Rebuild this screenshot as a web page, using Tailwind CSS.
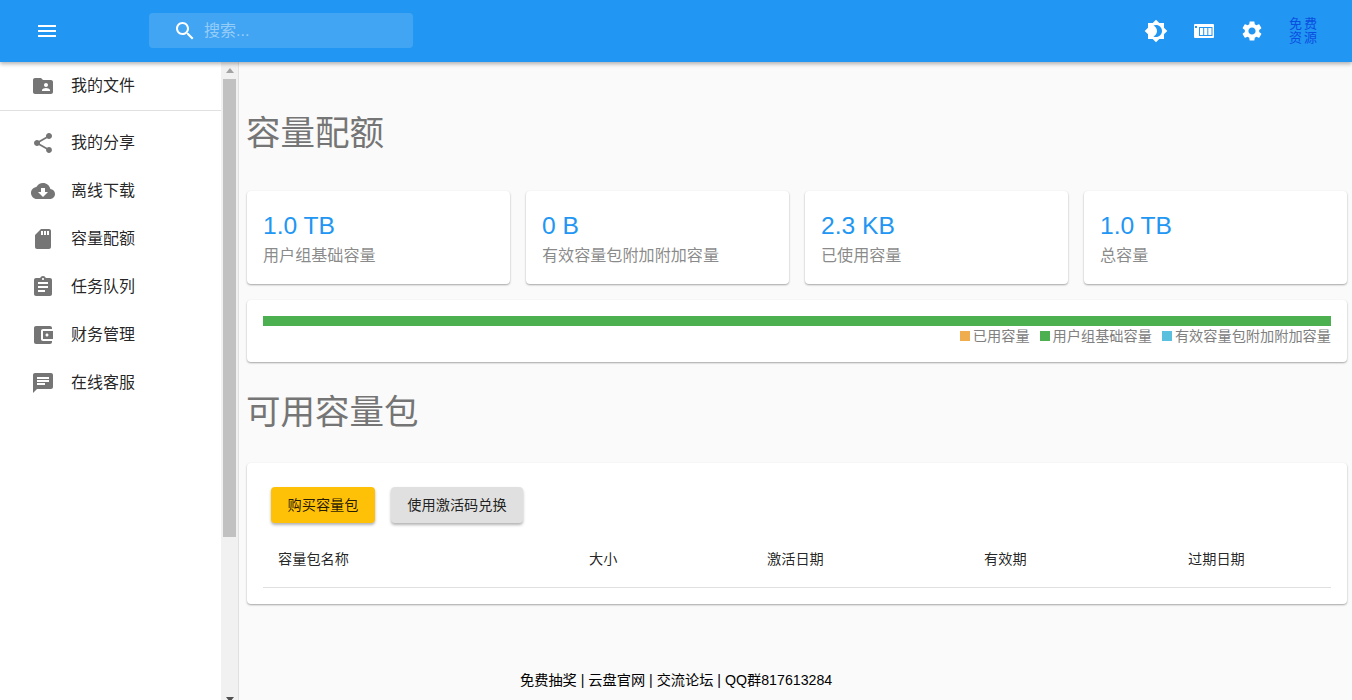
<!DOCTYPE html>
<html lang="zh-CN">
<head>
    <meta charset="UTF-8" />
    <meta name="viewport" content="width=device-width, initial-scale=1.0" />
    <title>容量配额</title>
    <script src="https://cdn.jsdelivr.net/npm/@tailwindcss/browser@4"></script>
</head>
<body class="h-screen overflow-hidden flex flex-col bg-[#fafafa] font-['Liberation_Sans','Noto_Sans_CJK_SC',sans-serif]">

<!-- App bar -->
<header class="relative z-10 h-[62px] shrink-0 flex items-center pb-[1px] bg-[#2196f3] shadow-[0_2px_4px_rgba(0,0,0,0.3)]">
    <button class="ml-[35px] w-6 h-6 text-white" aria-label="menu">
        <svg viewBox="0 0 24 24" fill="currentColor" class="w-6 h-6"><path d="M3 18h18v-2H3v2zm0-5h18v-2H3v2zm0-7v2h18V6H3z" /></svg>
    </button>
    <div class="ml-[90px] w-[264px] h-[35px] flex items-center rounded bg-white/15">
        <svg viewBox="0 0 24 24" fill="white" class="ml-[24px] w-6 h-6 shrink-0"><path d="M15.5 14h-.79l-.28-.27C15.41 12.59 16 11.11 16 9.5 16 5.91 13.09 3 9.5 3S3 5.91 3 9.5 5.91 16 9.5 16c1.61 0 3.09-.59 4.23-1.57l.27.28v.79l5 4.99L20.49 19l-4.99-5zm-6 0C7.01 14 5 11.99 5 9.5S7.01 5 9.5 5 14 7.01 14 9.5 11.99 14 9.5 14z" /></svg>
        <span class="ml-[7px] text-base text-white/45">搜索...</span>
    </div>
    <div class="ml-auto flex items-center text-white">
        <svg viewBox="0 0 24 24" fill="currentColor" class="w-6 h-6"><path d="M20 8.69V4h-4.69L12 .69 8.69 4H4v4.69L.69 12 4 15.31V20h4.69L12 23.31 15.31 20H20v-4.69L23.31 12 20 8.69zM12 18c-.89 0-1.74-.2-2.5-.55C11.56 16.5 13 14.42 13 12s-1.44-4.5-3.5-5.45C10.26 6.2 11.11 6 12 6c3.31 0 6 2.69 6 6s-2.69 6-6 6z" /></svg>
        <svg viewBox="0 0 24 24" class="ml-[24px] w-6 h-6">
            <rect x="2" y="5" width="20" height="14" rx="1" fill="white" />
            <rect x="3" y="7" width="2" height="2" fill="#2196f3" />
            <rect x="7.500" y="8.500" width="12.500" height="8" fill="none" stroke="#2196f3" />
            <path d="M11.700 8.500v8M15.800 8.500v8" stroke="#2196f3" fill="none" />
        </svg>
        <svg viewBox="0 0 24 24" fill="currentColor" class="ml-[24px] w-6 h-6"><path d="M19.14 12.94c.04-.3.06-.61.06-.94 0-.32-.02-.64-.07-.94l2.03-1.58c.18-.14.23-.41.12-.61l-1.92-3.32c-.12-.22-.37-.29-.59-.22l-2.39.96c-.5-.38-1.03-.7-1.62-.94l-.36-2.54c-.04-.24-.24-.41-.48-.41h-3.84c-.24 0-.43.17-.47.41l-.36 2.54c-.59.24-1.13.57-1.62.94l-2.39-.96c-.22-.08-.47 0-.59.22L2.74 8.87c-.12.21-.08.47.12.61l2.03 1.58c-.05.3-.09.63-.09.94s.02.64.07.94l-2.03 1.58c-.18.14-.23.41-.12.61l1.92 3.32c.12.22.37.29.59.22l2.39-.96c.5.38 1.03.7 1.62.94l.36 2.54c.05.24.24.41.48.41h3.84c.24 0 .44-.17.47-.41l.36-2.54c.59-.24 1.13-.56 1.62-.94l2.39.96c.22.08.47 0 .59-.22l1.92-3.32c.12-.22.07-.47-.12-.61l-2.01-1.58zM12 15.6c-1.98 0-3.6-1.62-3.6-3.6s1.62-3.6 3.6-3.6 3.6 1.62 3.6 3.6-1.62 3.6-3.6 3.6z" /></svg>
        <!-- logo -->
        <div class="ml-[25px] mr-[35px] w-[28px] grid grid-cols-2 gap-x-[2px] text-[13px] leading-[14px] text-center text-[#0a4fe0]">
            <span>免</span><span>费</span><span>资</span><span>源</span>
        </div>
    </div>
</header>

<div class="flex flex-1 min-h-0">
    <!-- Sidebar -->
    <aside class="w-[239px] shrink-0 flex bg-white border-r border-[#e0e0e0]">
        <nav class="w-[221px] shrink-0 text-base text-black/87">
            <a class="h-[49px] pb-[1px] flex items-center border-b border-[#e0e0e0]">
                <svg viewBox="0 0 24 24" fill="#757575" class="ml-[31px] w-6 h-6"><path d="M20 6h-8l-2-2H4c-1.1 0-1.99.9-1.99 2L2 18c0 1.1.9 2 2 2h16c1.1 0 2-.9 2-2V8c0-1.1-.9-2-2-2zm-5 3c1.1 0 2 .9 2 2s-.9 2-2 2-2-.9-2-2 .9-2 2-2zm4 8h-8v-1c0-1.33 2.67-2 4-2s4 .67 4 2v1z" /></svg>
                <span class="ml-[16px]">我的文件</span>
            </a>
            <a class="mt-[8px] h-[48px] flex items-center">
                <svg viewBox="0 0 24 24" fill="#757575" class="ml-[31px] w-6 h-6"><path d="M18 16.08c-.76 0-1.44.3-1.96.77L8.910 12.700c.05-.23.09-.46.09-.7s-.04-.47-.09-.7l7.050-4.110c.54.5 1.250.81 2.040.81 1.660 0 3-1.340 3-3s-1.340-3-3-3-3 1.340-3 3c0 .24.04.47.09.7L8.040 9.810C7.500 9.310 6.790 9 6 9c-1.660 0-3 1.340-3 3s1.340 3 3 3c.79 0 1.500-.31 2.040-.81l7.120 4.160c-.05.21-.08.43-.08.65 0 1.610 1.310 2.920 2.920 2.920 1.610 0 2.920-1.310 2.920-2.920s-1.310-2.920-2.920-2.920z" /></svg>
                <span class="ml-[16px]">我的分享</span>
            </a>
            <a class="h-[48px] flex items-center">
                <svg viewBox="0 0 24 24" fill="#757575" class="ml-[31px] w-6 h-6"><path d="M19.35 10.04C18.67 6.59 15.64 4 12 4 9.11 4 6.6 5.64 5.35 8.04 2.34 8.36 0 10.91 0 14c0 3.31 2.69 6 6 6h13c2.76 0 5-2.24 5-5 0-2.64-2.05-4.78-4.65-4.96zM17 13l-5 5-5-5h3V9h4v4h3z" /></svg>
                <span class="ml-[16px]">离线下载</span>
            </a>
            <a class="h-[48px] flex items-center">
                <svg viewBox="0 0 24 24" fill="#757575" class="ml-[31px] w-6 h-6"><path d="M18 2h-8L4.020 8 4 20c0 1.100.9 2 2 2h12c1.100 0 2-.9 2-2V4c0-1.100-.9-2-2-2zm-6 6h-2V4h2v4zm3 0h-2V4h2v4zm3 0h-2V4h2v4z" /></svg>
                <span class="ml-[16px]">容量配额</span>
            </a>
            <a class="h-[48px] flex items-center">
                <svg viewBox="0 0 24 24" fill="#757575" class="ml-[31px] w-6 h-6"><path d="M19 3h-4.180C14.400 1.840 13.300 1 12 1c-1.300 0-2.400.84-2.820 2H5c-1.100 0-2 .9-2 2v14c0 1.100.9 2 2 2h14c1.100 0 2-.9 2-2V5c0-1.100-.9-2-2-2zm-7 0c.55 0 1 .45 1 1s-.45 1-1 1-1-.45-1-1 .45-1 1-1zm2 14H7v-2h7v2zm3-4H7v-2h10v2zm0-4H7V7h10v2z" /></svg>
                <span class="ml-[16px]">任务队列</span>
            </a>
            <a class="h-[48px] flex items-center">
                <svg viewBox="0 0 24 24" fill="#757575" class="ml-[31px] w-6 h-6"><path d="M21 18v1c0 1.100-.9 2-2 2H5c-1.110 0-2-.9-2-2V5c0-1.100.89-2 2-2h14c1.100 0 2 .9 2 2v1h-9c-1.110 0-2 .9-2 2v8c0 1.100.89 2 2 2h9zm-9-2h10V8H12v8zm4-2.500c-.83 0-1.500-.67-1.500-1.500s.67-1.500 1.500-1.500 1.500.67 1.500 1.500-.67 1.500-1.500 1.500z" /></svg>
                <span class="ml-[16px]">财务管理</span>
            </a>
            <a class="h-[48px] flex items-center">
                <svg viewBox="0 0 24 24" fill="#757575" class="ml-[31px] w-6 h-6"><path d="M20 2H4c-1.100 0-1.990.9-1.990 2L2 22l4-4h14c1.100 0 2-.9 2-2V4c0-1.100-.9-2-2-2zM6 9h12v2H6V9zm8 5H6v-2h8v2zm4-6H6V6h12v2z" /></svg>
                <span class="ml-[16px]">在线客服</span>
            </a>
        </nav>
        <!-- Scrollbar -->
        <div class="w-[17px] flex flex-col items-center bg-[#f1f1f1]">
            <div class="mt-[6px] w-0 h-0 border-x-[4px] border-x-transparent border-b-[5px] border-b-[#a3a3a3]"></div>
            <div class="mt-[6px] w-[13px] h-[458px] bg-[#c1c1c1]"></div>
            <div class="mt-auto mb-[-2px] w-0 h-0 border-x-[4px] border-x-transparent border-t-[5px] border-t-[#505050]"></div>
        </div>
    </aside>

    <!-- Content -->
    <main class="flex-1 min-w-0 pl-[8px] pr-[5px]">
        <h1 class="mt-[51px] h-[40px] -ml-[1px] text-[34.500px] leading-[40px] font-normal text-[#757575]">容量配额</h1>

        <div class="mt-[38px] grid grid-cols-4 gap-[16px]">
            <div class="h-[93px] p-[16px] bg-white rounded shadow-[0_1px_2px_rgba(0,0,0,0.35)]">
                <div class="h-[30px] text-[24.600px] leading-[38px] text-[#2196f3]">1.0 TB</div>
                <div class="mt-[6px] text-[16.100px] leading-[24px] text-[#757575]/85">用户组基础容量</div>
            </div>
            <div class="h-[93px] p-[16px] bg-white rounded shadow-[0_1px_2px_rgba(0,0,0,0.35)]">
                <div class="h-[30px] text-[24.600px] leading-[38px] text-[#2196f3]">0 B</div>
                <div class="mt-[6px] text-[16.100px] leading-[24px] text-[#757575]/85">有效容量包附加附加容量</div>
            </div>
            <div class="h-[93px] p-[16px] bg-white rounded shadow-[0_1px_2px_rgba(0,0,0,0.35)]">
                <div class="h-[30px] text-[24.600px] leading-[38px] text-[#2196f3]">2.3 KB</div>
                <div class="mt-[6px] text-[16.100px] leading-[24px] text-[#757575]/85">已使用容量</div>
            </div>
            <div class="h-[93px] p-[16px] bg-white rounded shadow-[0_1px_2px_rgba(0,0,0,0.35)]">
                <div class="h-[30px] text-[24.600px] leading-[38px] text-[#2196f3]">1.0 TB</div>
                <div class="mt-[6px] text-[16.100px] leading-[24px] text-[#757575]/85">总容量</div>
            </div>
        </div>

        <div class="mt-[16px] h-[62px] p-[16px] bg-white rounded shadow-[0_1px_2px_rgba(0,0,0,0.35)]">
            <div class="h-[10px] bg-[#4caf50]"></div>
            <div class="flex justify-end text-[14.200px] leading-[20px] text-[#808080]">
                <span class="flex items-center"><i class="mr-[3px] w-[10px] h-[10px] bg-[#f0ad4e]"></i>已用容量</span>
                <span class="ml-[10px] flex items-center"><i class="mr-[3px] w-[10px] h-[10px] bg-[#4caf50]"></i>用户组基础容量</span>
                <span class="ml-[10px] flex items-center"><i class="mr-[3px] w-[10px] h-[10px] bg-[#5bc0de]"></i>有效容量包附加附加容量</span>
            </div>
        </div>

        <h1 class="mt-[30px] h-[40px] -ml-[1px] text-[34.500px] leading-[40px] font-normal text-[#757575]">可用容量包</h1>

        <div class="mt-[31px] h-[141px] p-[16px] bg-white rounded shadow-[0_1px_2px_rgba(0,0,0,0.35)]">
            <div class="flex gap-[16px] pt-[8px] pl-[8px]">
                <button class="h-[36px] w-[104px] pt-[1px] rounded bg-[#ffc107] text-[14.200px] text-black/87 shadow-[0_2px_3px_rgba(0,0,0,0.3)]">购买容量包</button>
                <button class="h-[36px] w-[132px] pt-[1px] rounded bg-[#e0e0e0] text-[14.200px] text-black/87 shadow-[0_2px_3px_rgba(0,0,0,0.3)]">使用激活码兑换</button>
            </div>
            <table class="mt-[8px] w-full table-fixed text-[14.200px] text-black/87">
                <thead>
                    <tr class="h-[56px] border-b border-[#e0e0e0]">
                        <th class="w-[310px] pt-[2px] pl-[15px] text-left font-normal">容量包名称</th>
                        <th class="w-[178px] pt-[2px] pl-[16px] text-left font-normal">大小</th>
                        <th class="w-[217px] pt-[2px] pl-[16px] text-left font-normal">激活日期</th>
                        <th class="w-[204px] pt-[2px] pl-[16px] text-left font-normal">有效期</th>
                        <th class="pt-[2px] pl-[16px] text-left font-normal">过期日期</th>
                    </tr>
                </thead>
            </table>
        </div>

        <footer class="mt-[66px] pl-[273px] text-[14.200px] leading-[20px] text-black">免费抽奖 | 云盘官网 | 交流论坛 | QQ群817613284</footer>
    </main>
</div>
</body>
</html>
